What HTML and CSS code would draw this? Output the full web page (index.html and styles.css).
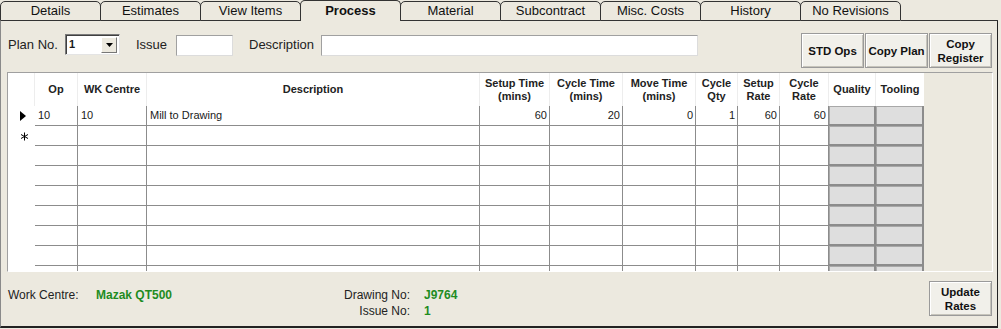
FILE: index.html
```html
<!DOCTYPE html>
<html lang="en">
<head>
    <meta charset="UTF-8">
    <title>Process</title>
    <link rel="stylesheet" href="styles.css">
</head>
<body>
    <!-- Tab strip -->
    <div class="tabs">
        <div class="tab">Details</div>
        <div class="tab">Estimates</div>
        <div class="tab">View Items</div>
        <div class="tab active">Process</div>
        <div class="tab">Material</div>
        <div class="tab">Subcontract</div>
        <div class="tab">Misc. Costs</div>
        <div class="tab">History</div>
        <div class="tab">No Revisions</div>
        <div class="tab-fill"></div>
    </div>

    <div class="panel">
        <!-- Plan header -->
        <div class="toolbar">
            <span class="lbl lbl-plan">Plan No.</span>
            <div class="combo">
                <span class="combo-val">1</span>
                <span class="combo-btn">
                    <svg width="7" height="4" viewBox="0 0 7 4"><path d="M0 0h7L3.5 4z" fill="#000"/></svg>
                </span>
            </div>
            <span class="lbl lbl-issue">Issue</span>
            <div class="field field-issue"></div>
            <span class="lbl lbl-desc">Description</span>
            <div class="field field-desc"></div>
            <div class="actions">
                <button class="btn">STD Ops</button>
                <button class="btn">Copy Plan</button>
                <button class="btn">Copy<br>Register</button>
            </div>
        </div>

        <!-- Operations grid -->
        <div class="grid-wrap">
            <table class="grid">
                <colgroup>
                    <col style="width:27px"><col style="width:43px"><col style="width:69px"><col style="width:333px">
                    <col style="width:70px"><col style="width:73px"><col style="width:73px"><col style="width:42px">
                    <col style="width:42px"><col style="width:49px"><col style="width:47px"><col style="width:48px">
                </colgroup>
                <thead>
                    <tr>
                        <th class="sel"></th>
                        <th>Op</th>
                        <th>WK Centre</th>
                        <th>Description</th>
                        <th>Setup Time<br>(mins)</th>
                        <th>Cycle Time<br>(mins)</th>
                        <th>Move Time<br>(mins)</th>
                        <th>Cycle<br>Qty</th>
                        <th>Setup<br>Rate</th>
                        <th>Cycle<br>Rate</th>
                        <th>Quality</th>
                        <th>Tooling</th>
                    </tr>
                </thead>
                <tbody id="rows">
                    <tr>
                        <td class="sel"><svg class="mark" width="6" height="10" viewBox="0 0 6 10"><path d="M0 0L6 5L0 10z" fill="#000"/></svg></td>
                        <td>10</td>
                        <td>10</td>
                        <td>Mill to Drawing</td>
                        <td class="num">60</td>
                        <td class="num">20</td>
                        <td class="num">0</td>
                        <td class="num">1</td>
                        <td class="num">60</td>
                        <td class="num">60</td>
                        <td class="cell-btn"></td>
                        <td class="cell-btn"></td>
                    </tr>
                    <tr>
                        <td class="sel"><svg class="mark" width="9" height="9" viewBox="0 0 9 9"><path d="M4.5 0.5v8M1 2.5l7 4M1 6.5l7-4" stroke="#000" stroke-width="1" fill="none"/></svg></td>
                        <td></td><td></td><td></td><td></td><td></td><td></td><td></td><td></td><td></td>
                        <td class="cell-btn"></td><td class="cell-btn"></td>
                    </tr>
                </tbody>
            </table>
        </div>

        <!-- Footer -->
        <div class="footer">
            <span class="f-lbl">Work Centre:</span>
            <span class="f-val f-wc">Mazak QT500</span>
            <div class="drawing">
                <span class="d-lbl">Drawing No:</span><span class="f-val">J9764</span>
                <span class="d-lbl">Issue No:</span><span class="f-val">1</span>
            </div>
            <button class="btn btn-update">Update<br>Rates</button>
        </div>
    </div>

<script>
    // fill the rest of the grid with blank rows
    const rows = document.getElementById("rows");
    for (let i = 0; i < 7; i++) {
        const tr = document.createElement("tr");
        let html = '<td class="sel"></td>';
        for (let c = 0; c < 9; c++) html += "<td></td>";
        html += '<td class="cell-btn"></td><td class="cell-btn"></td>';
        tr.innerHTML = html;
        rows.appendChild(tr);
    }
</script>
</body>
</html>
```

FILE: styles.css
```css
/* General Page Styling */
* {
    box-sizing: border-box;
}

body {
    margin: 0;
    width: 1001px;
    height: 329px;
    overflow: hidden;
    background: #ece9df;
    font-family: "Liberation Sans", Arial, sans-serif;
    color: #1a1a1a;
}

/* Tabs */
.tabs {
    display: flex;
    align-items: flex-end;
    width: 998px;
    height: 21px;
}

.tab {
    width: 101px;
    height: 20px;
    margin-left: -1px;
    border: 1px solid #333;
    border-radius: 5px 5px 0 0;
    background: #ece9df;
    font-size: 13px;
    line-height: 17px;
    text-align: center;
    color: #111;
}

.tab:first-child {
    margin-left: 0;
}

.tab.active {
    height: 21px;
    border-bottom: none;
    font-weight: bold;
    line-height: 20px;
}

.tab-fill {
    flex: 1;
    height: 1px;
    border-bottom: 1px solid #333;
}

/* Panel */
.panel {
    width: 998px;
    height: 307px;
    border-left: 1px solid #8a8a8a;
    border-right: 1px solid #222;
    border-bottom: 2px solid #222;
    display: flex;
    flex-direction: column;
}

.toolbar {
    flex-shrink: 0;
    height: 51px;
    display: flex;
    align-items: flex-start;
    padding: 0 5px 0 7px;
}

.lbl {
    margin-top: 13px;
    font-size: 13px;
    line-height: 21px;
    color: #222;
    white-space: nowrap;
}

.lbl-plan { width: 57px; }
.lbl-issue { width: 40px; margin-left: 16px; }
.lbl-desc { width: 72px; margin-left: 16px; }

.combo {
    margin-top: 13px;
    width: 55px;
    height: 21px;
    background: #fff;
    border: 1px solid;
    border-color: #7a7a7a #e4e4e4 #e4e4e4 #7a7a7a;
    box-shadow: inset 1px 1px 0 #404040;
    display: flex;
    justify-content: space-between;
    padding: 2px 2px 2px 3px;
}

.combo-val {
    font-size: 11px;
    font-weight: bold;
    line-height: 14px;
}

.combo-btn {
    width: 16px;
    height: 16px;
    background: #ece9df;
    border: 1px solid;
    border-color: #fff #777 #777 #fff;
    display: flex;
    align-items: center;
    justify-content: center;
}

.field {
    margin-top: 14px;
    height: 21px;
    background: #fff;
    border: 1px solid;
    border-color: #a0a0a0 #dcdcdc #dcdcdc #a0a0a0;
}

.field-issue { width: 57px; }
.field-desc { width: 377px; }

.actions {
    margin-left: auto;
    margin-top: 12px;
    display: flex;
    gap: 1px;
}

.btn {
    width: 63px;
    height: 35px;
    padding: 0;
    background: #f1f0ea;
    border: 1px solid #9a9a9a;
    box-shadow: inset 1px 1px 0 #fff, inset -1px -1px 0 #c6c4bb;
    font-family: "Liberation Sans", Arial, sans-serif;
    font-size: 11.5px;
    font-weight: bold;
    line-height: 14px;
    color: #111;
}

/* Grid */
.grid-wrap {
    flex-shrink: 0;
    width: 986px;
    height: 200px;
    margin-left: 6px;
    overflow: hidden;
    background: #ece9df;
    border: 1px solid;
    border-color: #a0a0a0 #fff #fff #a0a0a0;
}

.grid {
    width: 916px;
    table-layout: fixed;
    border-collapse: separate;
    border-spacing: 0;
    background: #fff;
    font-size: 11px;
}

.grid th {
    height: 33px;
    padding: 0;
    font-weight: bold;
    line-height: 13px;
    color: #222;
    border-right: 1px solid #ededed;
}

.grid th:last-child {
    border-right: none;
}

.grid td {
    height: 20px;
    padding: 0 3px;
    line-height: 19px;
    white-space: nowrap;
    overflow: hidden;
    border-right: 1px solid #8c8c8c;
    border-bottom: 1px solid #8c8c8c;
}

.grid td.sel {
    border: none;
    padding: 0;
}

.mark {
    display: block;
    margin-left: 12px;
}

.grid td.num {
    text-align: right;
    padding-right: 2px;
}

.grid td.cell-btn {
    background: #dedede;
    border-right: 2px solid #8c8c8c;
    border-bottom: 2px solid #8c8c8c;
    box-shadow: inset 1px 1px 0 #a8a8a8;
}

/* Footer */
.footer {
    flex: 1;
    display: flex;
    align-items: flex-start;
    padding: 0 5px 0 7px;
    font-size: 12px;
    line-height: 16px;
    white-space: nowrap;
}

.f-lbl {
    width: 88px;
    margin-top: 15px;
    color: #222;
}

.f-val {
    font-weight: bold;
    color: #1f8c1f;
}

.f-wc {
    width: 248px;
    margin-top: 15px;
}

.drawing {
    margin-top: 15px;
    display: grid;
    grid-template-columns: 66px auto;
    column-gap: 14px;
}

.d-lbl {
    text-align: right;
    color: #222;
}

.btn-update {
    margin-left: auto;
    margin-top: 9px;
}
```
